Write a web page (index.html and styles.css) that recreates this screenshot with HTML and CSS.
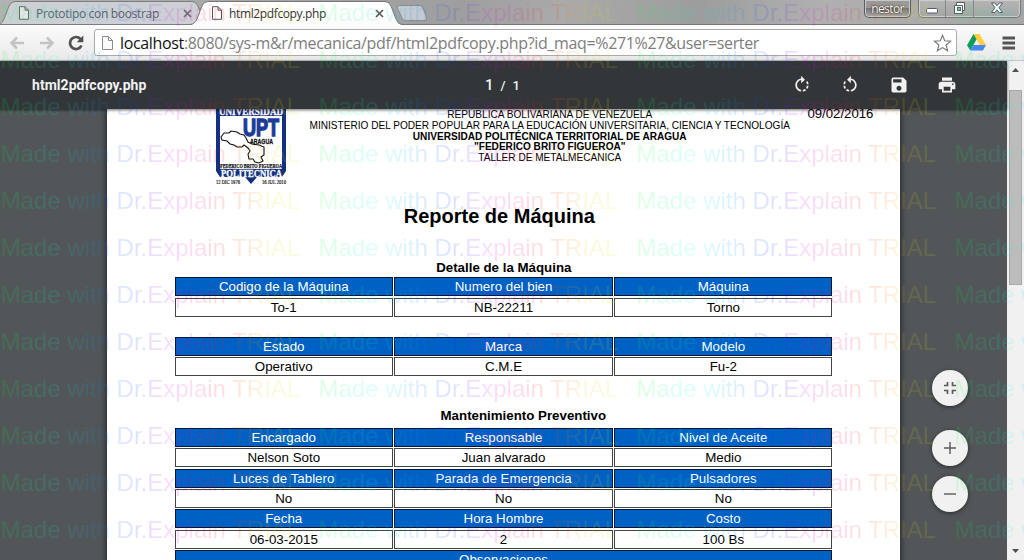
FILE: index.html
```html
<!DOCTYPE html>
<html lang="es">
<head>
<meta charset="utf-8">
<title>html2pdfcopy.php</title>
<link rel="stylesheet" href="styles.css">
</head>
<body>
<div class="browser">
  <div class="tabstrip">
    <svg class="tab-shapes" width="440" height="25" viewBox="0 0 440 25">
      <defs><linearGradient id="on" x1="0" y1="0" x2="0" y2="1"><stop offset="0" stop-color="#fff"/><stop offset="1" stop-color="#fbfbfb"/></linearGradient></defs>
      <path d="M-2 24.5 Q2 24 4 19 L9 6 Q11 1.5 15 1.5 H192 Q196 1.5 198 6 L203 19 Q205 24.500 208 24.500" fill="#ccd0d5" stroke="#7d7d7d"/>
      <path d="M0 24.500H193" stroke="#7d7d7d"/>
      <path d="M190 25 Q195 24 197 19 L202 6 Q204 1.500 208 1.500 H385 Q389 1.500 391 6 L396 19 Q398 24.500 402 24.500 H440 V26 H190Z" fill="url(#on)"/>
      <path d="M190 24.500 Q195 24 197 19 L202 6 Q204 1.500 208 1.500 H385 Q389 1.500 391 6 L396 19 Q398 24.500 402 24.500 H440" fill="none" stroke="#777"/>
      <path d="M399 5.500 H419 Q422 5.500 423 8 L426.500 17 Q427.500 20.500 425 20.500 H406 Q403 20.500 402 18 L397.500 8 Q396.500 5.500 399 5.500Z" fill="#c5cad1" stroke="#8a8c8f"/>
    </svg>
    <div class="tab tab-off">
      <svg class="doc" width="12" height="14" viewBox="0 0 12 14"><path d="M1.500 .700H7L10.500 4.200V13.300H1.500ZM7 .700V4.200H10.500" fill="#e3e5e8" stroke="#666"/></svg>
      <span class="tab-title">Prototipo con boostrap</span>
      <svg class="close" width="9" height="9" viewBox="0 0 9 9"><path d="M1 1L8 8M8 1L1 8" stroke="#6b6d70" stroke-width="1.600"/></svg>
    </div>
    <div class="tab tab-on">
      <svg class="doc" width="12" height="14" viewBox="0 0 12 14"><path d="M1.500 .700H7L10.500 4.200V13.300H1.500ZM7 .700V4.200H10.500" fill="#fff" stroke="#555"/></svg>
      <span class="tab-title">html2pdfcopy.php</span>
      <svg class="close" width="9" height="9" viewBox="0 0 9 9"><path d="M1 1L8 8M8 1L1 8" stroke="#555" stroke-width="1.600"/></svg>
    </div>
    <div class="window-tools">
      <div class="user">nestor</div>
      <div class="controls">
        <span class="ctl"><svg width="12" height="6" viewBox="0 0 12 6"><rect x=".5" y=".5" width="11" height="4.500" rx="1" fill="#fff" stroke="#555b66"/></svg></span>
        <span class="ctl"><svg width="13" height="12" viewBox="0 0 13 12"><path d="M3.500 .500H11.500V8.500H9.500V11.500H1.500V3.500H3.500Z" fill="#fff" stroke="#555b66"/><rect x="4.500" y="5.500" width="3" height="3" fill="#aaa" stroke="#555b66"/><path d="M3.500 3.500H9.500V8.500" fill="none" stroke="#555b66"/></svg></span>
        <span class="ctl wide"><svg width="14" height="12" viewBox="0 0 14 12"><path d="M1.500 1H4.800L7 3.700L9.200 1H12.500L9 5.700L12.500 10.500H9.200L7 7.800L4.800 10.500H1.500L5 5.700Z" fill="#fff" stroke="#555b66"/></svg></span>
      </div>
    </div>
  </div>

  <div class="navbar">
    <svg class="nav" width="16" height="14" viewBox="0 0 16 14"><path d="M15 7H3M8 1.500L2.500 7L8 12.500" fill="none" stroke="#c3c3c3" stroke-width="2.500"/></svg>
    <svg class="nav" width="16" height="14" viewBox="0 0 16 14"><path d="M1 7H13M8 1.500L13.500 7L8 12.500" fill="none" stroke="#c3c3c3" stroke-width="2.500"/></svg>
    <svg class="reload" width="16" height="16" viewBox="0 0 16 16"><path d="M12.500 4A6 6 0 1 0 13.500 10.500" fill="none" stroke="#505050" stroke-width="2.700"/><path d="M15.300 .500V7.200H8.700Z" fill="#505050"/></svg>
    <div class="address">
      <svg class="page-icon" width="13" height="16" viewBox="0 0 13 16"><path d="M1.500 1.500H7.500L11.500 5.500V14.500H1.500ZM7.500 1.500V5.500H11.500" fill="#fafafa" stroke="#8b8b8b"/></svg>
      <span class="url"><b>localhost</b>:8080/sys-m&amp;r/mecanica/pdf/html2pdfcopy.php?id_maq=%271%27&amp;user=serter</span>
      <svg class="star" width="19" height="18" viewBox="0 0 19 18"><path d="M9.500 1.200L11.700 6.700L17.700 7.100L13.100 11L14.600 16.800L9.500 13.600L4.400 16.800L5.900 11L1.300 7.100L7.300 6.700Z" fill="#fff" stroke="#777" stroke-width="1.100"/></svg>
    </div>
    <svg class="drive" width="19" height="17" viewBox="0 0 19 17"><path d="M6.500 0H12.500L19 11H12.700Z" fill="#ffcf40"/><path d="M6.500 0L9.600 5.300L3.300 16.500L0 11.200Z" fill="#109d59"/><path d="M6.400 11H19L15.900 16.500H3.300Z" fill="#4487f5"/></svg>
    <svg class="menu" width="14" height="14" viewBox="0 0 14 14"><path d="M.5 2H13M.5 7H13M.5 12H13" stroke="#555" stroke-width="2.800"/></svg>
  </div>

  <div class="content">
    <div class="viewer">
      <div class="pdfbar">
        <div class="file">html2pdfcopy.php</div>
        <div class="pager"><span class="cur">1</span><span>/</span><span>1</span></div>
        <div class="actions">
          <svg width="20" height="20" viewBox="0 0 24 24" fill="#f1f1f1"><path d="M15.550 5.550L11 1v3.070C7.060 4.560 4 7.920 4 12s3.050 7.440 7 7.930v-2.020c-2.840-.480-5-2.940-5-5.910s2.160-5.430 5-5.910V10l4.550-4.450zM19.930 11c-.17-1.390-.72-2.730-1.620-3.890l-1.420 1.420c.54.750.88 1.600 1.020 2.470h2.020zM13 17.900v2.020c1.390-.17 2.740-.71 3.900-1.610l-1.440-1.440c-.75.540-1.590.89-2.460 1.030zm3.890-2.420l1.420 1.410c.9-1.160 1.450-2.500 1.620-3.890h-2.020c-.14.870-.48 1.720-1.020 2.480z"/></svg>
          <svg width="20" height="20" viewBox="0 0 24 24" fill="#f1f1f1"><g transform="translate(24 0) scale(-1 1)"><path d="M15.550 5.550L11 1v3.070C7.060 4.560 4 7.920 4 12s3.050 7.440 7 7.930v-2.020c-2.840-.480-5-2.940-5-5.910s2.160-5.430 5-5.910V10l4.550-4.450zM19.930 11c-.17-1.390-.72-2.730-1.620-3.890l-1.420 1.420c.54.750.88 1.600 1.020 2.470h2.020zM13 17.900v2.020c1.390-.17 2.740-.71 3.900-1.610l-1.440-1.440c-.75.540-1.590.89-2.460 1.030zm3.890-2.420l1.420 1.410c.9-1.160 1.450-2.500 1.620-3.890h-2.020c-.14.870-.48 1.720-1.020 2.480z"/></g></svg>
          <svg width="20" height="20" viewBox="0 0 24 24" fill="#f1f1f1"><path d="M17 3H5a2 2 0 0 0-2 2v14a2 2 0 0 0 2 2h14c1.100 0 2-.9 2-2V7l-4-4zm-5 16c-1.660 0-3-1.340-3-3s1.340-3 3-3 3 1.340 3 3-1.340 3-3 3zm3-10H5V5h10v4z"/></svg>
          <svg width="20" height="20" viewBox="0 0 24 24" fill="#f1f1f1"><path d="M19 8H5c-1.660 0-3 1.340-3 3v6h4v4h12v-4h4v-6c0-1.660-1.340-3-3-3zm-3 11H8v-5h8v5zm3-7c-.55 0-1-.45-1-1s.45-1 1-1 1 .45 1 1-.45 1-1 1zm-1-9H6v4h12V3z"/></svg>
        </div>
      </div>
      <div class="canvas">
        <div class="sheet">
          <div class="letterhead">
            <svg class="crest" width="72" height="88" viewBox="0 0 72 88">
              <path d="M1 0H71V70L67 76H42L36 83L30 76H5L1 70Z" fill="#14307f"/>
              <rect x="5" y="15" width="62" height="53" fill="#fff"/>
              <g font-family="Liberation Serif, serif" font-weight="bold">
                <text x="4" y="14" font-size="10" fill="#fff" stroke="#fff" stroke-width=".3" textLength="64" lengthAdjust="spacingAndGlyphs">UNIVERSIDAD</text>
                <text x="6" y="75.500" font-size="9.500" fill="#fff" stroke="#fff" stroke-width=".3" textLength="61" lengthAdjust="spacingAndGlyphs">POLITECNICA</text>
                <text x="5" y="67" font-size="7" fill="#111" stroke="#111" stroke-width=".25" textLength="62" lengthAdjust="spacingAndGlyphs">FEDERICO BRITO FIGUEROA</text>
              </g>
              <text x="28" y="34.500" font-family="Liberation Sans, sans-serif" font-weight="bold" font-size="24" fill="#1d3b98" stroke="#1d3b98" stroke-width="1.500" textLength="36" lengthAdjust="spacingAndGlyphs">UPT</text>
              <text x="35" y="42.500" font-family="Liberation Sans, sans-serif" font-weight="bold" font-size="7.500" fill="#111" stroke="#111" stroke-width=".3" textLength="23" lengthAdjust="spacingAndGlyphs">ARAGUA</text>
              <path d="M6 36L9 32L14 32L16 30L22 31L25 33L29 34L31 37L33 41L37 43L44 44L49 46L49 54L46 56L48 60L44 62L40 61L38 58L34 58L33 53L35 50L33 47L29 44L27 46L22 46L19 44L15 43L12 40L7 39Z" fill="#fff" stroke="#111" stroke-width="1.100"/>
              <text x="1" y="83" font-family="Liberation Serif, serif" font-size="6" fill="#111" stroke="#111" stroke-width=".2" textLength="24" lengthAdjust="spacingAndGlyphs">12 DIC 1976</text>
              <text x="47" y="83" font-family="Liberation Serif, serif" font-size="6" fill="#111" stroke="#111" stroke-width=".2" textLength="24" lengthAdjust="spacingAndGlyphs">16 JUL 2010</text>
            </svg>
            <div class="institution">
              <div>REPÚBLICA BOLIVARIANA DE VENEZUELA</div>
              <div>MINISTERIO DEL PODER POPULAR PARA LA EDUCACIÓN UNIVERSITARIA, CIENCIA Y TECNOLOGÍA</div>
              <div class="strong">UNIVERSIDAD POLITÉCNICA TERRITORIAL DE ARAGUA</div>
              <div class="strong">"FEDERICO BRITO FIGUEROA"</div>
              <div>TALLER DE METALMECANICA</div>
            </div>
            <div class="date">09/02/2016</div>
          </div>
          <h1 class="title">Reporte de Máquina</h1>
          <h2 class="section">Detalle de la Máquina</h2>
          <div class="grid">
            <div class="th">Codigo de la Máquina</div><div class="th">Numero del bien</div><div class="th">Máquina</div>
            <div class="td">To-1</div><div class="td">NB-22211</div><div class="td">Torno</div>
          </div>
          <div class="grid second">
            <div class="th">Estado</div><div class="th">Marca</div><div class="th">Modelo</div>
            <div class="td">Operativo</div><div class="td">C.M.E</div><div class="td">Fu-2</div>
          </div>
          <h2 class="section maint">Mantenimiento Preventivo</h2>
          <div class="grid">
            <div class="th">Encargado</div><div class="th">Responsable</div><div class="th">Nivel de Aceite</div>
            <div class="td">Nelson Soto</div><div class="td">Juan alvarado</div><div class="td">Medio</div>
            <div class="th">Luces de Tablero</div><div class="th">Parada de Emergencia</div><div class="th">Pulsadores</div>
            <div class="td">No</div><div class="td">No</div><div class="td">No</div>
            <div class="th">Fecha</div><div class="th">Hora Hombre</div><div class="th">Costo</div>
            <div class="td">06-03-2015</div><div class="td">2</div><div class="td">100 Bs</div>
            <div class="th full">Observaciones</div>
          </div>
        </div>
        <div class="zoom-buttons">
          <div class="fab fit"><svg width="14" height="14" viewBox="0 0 14 14"><path d="M1 4.500H4.500V1M9.500 1V4.500H13M1 9.500H4.500V13M9.500 13V9.500H13" fill="none" stroke="#5a5a5a" stroke-width="1.700"/></svg></div>
          <div class="fab"><svg width="14" height="14" viewBox="0 0 14 14"><path d="M1 7H13M7 1V13" stroke="#5a5a5a" stroke-width="1.400"/></svg></div>
          <div class="fab"><svg width="14" height="14" viewBox="0 0 14 14"><path d="M1 7H13" stroke="#5a5a5a" stroke-width="1.400"/></svg></div>
        </div>
      </div>
    </div>
    <div class="scrollbar">
      <svg width="7" height="4" viewBox="0 0 7 4"><path d="M0 4L3.500 0L7 4Z" fill="#505050"/></svg>
      <div class="thumb"></div>
      <svg class="down" width="7" height="4" viewBox="0 0 7 4"><path d="M0 0L3.500 4L7 0Z" fill="#505050"/></svg>
    </div>
  </div>
</div>
<div class="watermark" id="watermark"></div>
<script src="watermark.js"></script>
</body>
</html>
```
FILE: styles.css
```css
* { box-sizing: border-box; }
body { margin: 0; width: 1024px; height: 560px; overflow: hidden; position: relative; font-family: "Liberation Sans", Arial, sans-serif; }
svg { display: block; flex: none; }
.browser { height: 560px; display: flex; flex-direction: column; }

.tabstrip { position: relative; height: 25px; flex: none; display: flex; background: linear-gradient(100deg, #b2b2b2, #9e9e9e 45%, #aaa 55%, #9d9d9d 68%, #b0b0b0 80%, #a6a6a6); border-bottom: 1px solid #777; }
.tab-shapes { position: absolute; left: 0; top: 0; }
.tab { position: relative; display: flex; align-items: center; height: 26px; font: 12px "Open Sans", "Noto Sans", sans-serif; }
.tab-off { width: 193px; padding-left: 18px; color: #5c6066; }
.tab-on { width: 193px; padding-left: 18px; color: #333; }
.tab-title { margin-left: 6px; white-space: nowrap; }
.tab-off .tab-title { letter-spacing: -0.32px; }
.tab-on .tab-title { letter-spacing: -0.37px; }
.close { margin-left: auto; margin-right: 1px; }
.tab-on .close { margin-right: 2px; }
.window-tools { margin-left: auto; display: flex; gap: 7px; padding-right: 3px; }
.user { width: 47px; height: 18px; border: 1px solid #5c5c5c; border-top: 0; border-radius: 0 0 5px 5px; background: linear-gradient(#999 0 45%, #777 50%, #aaa); box-shadow: inset 0 0 0 1px #c8c8c8; color: #fff; text-align: center; font: 12px/17px "Open Sans", sans-serif; text-shadow: 0 0 2px #222, 0 0 1px #222; letter-spacing: -0.6px; }
.controls { display: flex; width: 103px; height: 18px; border: 1px solid #777; border-top: 0; border-radius: 0 0 5px 5px; background: linear-gradient(#b5b5b5, #a5a5a5); box-shadow: inset 0 0 0 1px #ccc; }
.ctl { width: 28px; display: flex; align-items: center; justify-content: center; border-right: 1px solid #888; }
.ctl svg { margin-top: -2px; }
.ctl:first-child svg { margin-top: 4px; }
.ctl.wide { width: 47px; border: 0; }

.navbar { height: 36px; flex: none; display: flex; align-items: center; background: linear-gradient(#fbfbfb, #e9e9e9); padding: 0 8px 0 9px; border-bottom: 1px solid #c5c5c5; }
.nav + .nav { margin-left: 14px; }
.reload { margin-left: 13px; }
.address { margin-left: 10px; width: 863px; height: 27px; display: flex; align-items: center; padding: 0 4px 0 6px; background: #fff; border: 1px solid #aaa; border-radius: 3px; }
.url { margin-left: 6px; font: 16px/24px "Open Sans", "Noto Sans", sans-serif; color: #7d7d7d; white-space: nowrap; letter-spacing: -0.345px; }
.url b { font-weight: normal; color: #111; }
.star { margin-left: auto; }
.drive { margin-left: 10px; }
.menu { margin-left: 16px; }

.content { height: 499px; display: flex; }
.viewer { width: 1007px; display: flex; flex-direction: column; }
.pdfbar { position: relative; z-index: 2; height: 48px; flex: none; display: flex; align-items: center; background: #323639; color: #f1f1f1; font-family: Roboto, sans-serif; box-shadow: 0 1px 3px rgba(0,0,0,.6); padding-left: 32px; }
.file { width: 453px; font-size: 14px; font-weight: bold; letter-spacing: 0.04px; }
.pager { display: flex; align-items: baseline; gap: 7px; width: 307px; font-size: 13px; font-weight: 500; }
.cur { font-size: 15px; }
.actions { display: flex; gap: 28.300px; }
.canvas { position: relative; height: 451px; overflow: hidden; background: #525659; padding-left: 107px; }
.sheet { width: 793px; height: 470px; background: #fff; box-shadow: 0 0 6px 1px rgba(0,0,0,.55); padding: 0 67px 0 67.600px; }
.letterhead { display: flex; height: 88px; }
.crest { margin: -8px 0 0 40px; }
.institution { width: 524px; margin-left: -1px; padding: 1px 0 0 24px; text-align: center; font-size: 10.080px; line-height: 10.800px; white-space: nowrap; }
.strong { font-weight: bold; }
.date { width: 67px; margin-left: -1px; padding-left: 18.500px; font-size: 13.200px; line-height: 10px; white-space: nowrap; }
.title { margin: 7px 0 0; padding-right: 9px; text-align: center; font-size: 20px; line-height: 24px; }
.section { margin: 32px 0 0; text-align: center; font-size: 13.300px; line-height: 16px; height: 17.300px; }
.grid { display: grid; grid-template-columns: repeat(3, 218.300px); grid-auto-rows: 19px; gap: 1.350px 1.500px; }
.grid.second { margin-top: 20.200px; }
.section.maint { height: 19.800px; padding-left: 39px; }
.th, .td { border: 1px solid #222; text-align: center; font-size: 13.330px; line-height: 18px; white-space: nowrap; }
.th { background: #0061c5; color: #fff; border-color: #001633; }
.td { border-color: #444; }
.full { grid-column: 1 / -1; }
.zoom-buttons { position: absolute; right: 39px; top: 261px; }
.fab { width: 36px; height: 36px; margin-bottom: 10px; border-radius: 50%; background: #f1f1f1; display: flex; align-items: center; justify-content: center; box-shadow: 0 1px 4px rgba(0,0,0,.5); }
.fab.fit { margin-bottom: 24px; }
.scrollbar { width: 17px; background: #f1f1f1; display: flex; flex-direction: column; align-items: center; padding: 7px 0; }
.thumb { margin-top: 18px; width: 13px; height: 195px; background: #bcbcbc; border: 1px solid #a8a8a8; }
.down { margin-top: auto; }

.watermark { position: absolute; inset: -1px 0 0 0; z-index: 10; overflow: hidden; display: grid; grid-template-columns: repeat(4, 318px); grid-auto-rows: 47px; opacity: .13; pointer-events: none; }
.mark { width: 318px; height: 28px; padding-left: .500px; font: 24px/28px "Liberation Sans", Arial, sans-serif; white-space: nowrap; color: transparent; background: linear-gradient(90deg, #00ff30, #00ffe0 60px, #0080ff 105px, #2020ff 140px, #e000ff 170px, #ff0060 205px, #ff2000 230px, #ffc000 265px, #c0ff00 300px); -webkit-background-clip: text; background-clip: text; }
```
FILE: watermark.js
```js
const layer = document.getElementById('watermark');
for (let i = 0; i < 48; i++) {
  const mark = document.createElement('div');
  mark.className = 'mark';
  mark.textContent = 'Made with Dr.Explain TRIAL';
  layer.appendChild(mark);
}
```
